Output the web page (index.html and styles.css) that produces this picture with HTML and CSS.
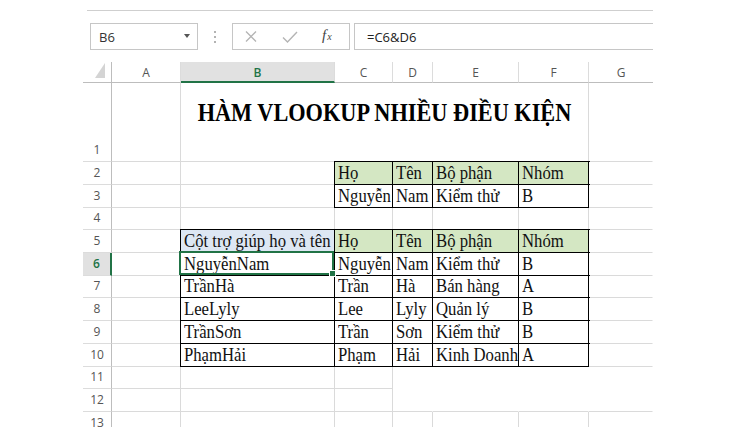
FILE: index.html
```html
<!DOCTYPE html>
<html lang="vi">
<head>
<meta charset="utf-8">
<title>HÀM VLOOKUP NHIỀU ĐIỀU KIỆN</title>
<link rel="stylesheet" href="styles.css">
</head>
<body>
<div class="app">
  <div class="topline"></div>
  <div class="fbar">
    <div class="namebox"><span>B6</span><span class="caret"></span></div>
    <div class="dots">
      <svg width="4" height="14" viewBox="0 0 4 14"><circle cx="2" cy="2" r="1" fill="#9a9a9a"/><circle cx="2" cy="7" r="1" fill="#9a9a9a"/><circle cx="2" cy="12" r="1" fill="#9a9a9a"/></svg>
    </div>
    <div class="fxbox">
      <svg class="ix" width="12" height="11" viewBox="0 0 12 11"><path d="M1 0.5 L11 10.5 M11 0.5 L1 10.5" stroke="#b4b4b4" stroke-width="1.3" fill="none"/></svg>
      <svg class="ic" width="16" height="12" viewBox="0 0 16 12"><path d="M1 6.5 L5.5 11 L15 1" stroke="#b4b4b4" stroke-width="1.4" fill="none"/></svg>
      <span class="fx">f<span>x</span></span>
    </div>
    <div class="formula">=C6&amp;D6</div>
  </div>

  <div class="sheet">
    <!-- header row -->
    <div class="corner"><svg width="10" height="15" viewBox="0 0 10 15"><polygon points="10,0 10,15 0,15" fill="#d4d4d4"/></svg></div>
    <div class="ch">A</div>
    <div class="ch cur">B</div>
    <div class="ch">C</div>
    <div class="ch">D</div>
    <div class="ch">E</div>
    <div class="ch">F</div>
    <div class="ch e">G</div>

    <!-- row 1 -->
    <div class="rh"><span>1</span></div>
    <div class="c"></div>
    <div class="c title"><span>HÀM VLOOKUP NHIỀU ĐIỀU KIỆN</span></div>
    <div class="c e"></div>

    <!-- row 2 -->
    <div class="rh"><span>2</span></div>
    <div class="c"></div>
    <div class="c"></div>
    <div class="c b g"><span>Họ</span></div>
    <div class="c b g"><span>Tên</span></div>
    <div class="c b g"><span>Bộ phận</span></div>
    <div class="c b g"><span>Nhóm</span></div>
    <div class="c e"></div>

    <!-- row 3 -->
    <div class="rh"><span>3</span></div>
    <div class="c"></div>
    <div class="c"></div>
    <div class="c b"><span>Nguyễn</span></div>
    <div class="c b"><span>Nam</span></div>
    <div class="c b"><span>Kiểm thử</span></div>
    <div class="c b"><span>B</span></div>
    <div class="c e"></div>

    <!-- row 4 -->
    <div class="rh"><span>4</span></div>
    <div class="c"></div>
    <div class="c"></div>
    <div class="c"></div>
    <div class="c"></div>
    <div class="c"></div>
    <div class="c"></div>
    <div class="c e"></div>

    <!-- row 5 -->
    <div class="rh"><span>5</span></div>
    <div class="c"></div>
    <div class="c b bl"><span>Cột trợ giúp họ và tên</span></div>
    <div class="c b g"><span>Họ</span></div>
    <div class="c b g"><span>Tên</span></div>
    <div class="c b g"><span>Bộ phận</span></div>
    <div class="c b g"><span>Nhóm</span></div>
    <div class="c e"></div>

    <!-- row 6 -->
    <div class="rh cur"><span>6</span></div>
    <div class="c"></div>
    <div class="c b sel"><span>NguyễnNam</span></div>
    <div class="c b"><span>Nguyễn</span></div>
    <div class="c b"><span>Nam</span></div>
    <div class="c b"><span>Kiểm thử</span></div>
    <div class="c b"><span>B</span></div>
    <div class="c e"></div>

    <!-- row 7 -->
    <div class="rh"><span>7</span></div>
    <div class="c"></div>
    <div class="c b"><span>TrầnHà</span></div>
    <div class="c b"><span>Trần</span></div>
    <div class="c b"><span>Hà</span></div>
    <div class="c b"><span>Bán hàng</span></div>
    <div class="c b"><span>A</span></div>
    <div class="c e"></div>

    <!-- row 8 -->
    <div class="rh"><span>8</span></div>
    <div class="c"></div>
    <div class="c b"><span>LeeLyly</span></div>
    <div class="c b"><span>Lee</span></div>
    <div class="c b"><span>Lyly</span></div>
    <div class="c b"><span>Quản lý</span></div>
    <div class="c b"><span>B</span></div>
    <div class="c e"></div>

    <!-- row 9 -->
    <div class="rh"><span>9</span></div>
    <div class="c"></div>
    <div class="c b"><span>TrầnSơn</span></div>
    <div class="c b"><span>Trần</span></div>
    <div class="c b"><span>Sơn</span></div>
    <div class="c b"><span>Kiểm thử</span></div>
    <div class="c b"><span>B</span></div>
    <div class="c e"></div>

    <!-- row 10 -->
    <div class="rh"><span>10</span></div>
    <div class="c"></div>
    <div class="c b"><span>PhạmHải</span></div>
    <div class="c b"><span>Phạm</span></div>
    <div class="c b"><span>Hải</span></div>
    <div class="c b"><span>Kinh Doanh</span></div>
    <div class="c b"><span>A</span></div>
    <div class="c e"></div>

    <!-- row 11 -->
    <div class="rh"><span>11</span></div>
    <div class="c"></div>
    <div class="c"></div>
    <div class="c"></div>
    <div class="c nb"></div>
    <div class="c nb"></div>
    <div class="c nb"></div>
    <div class="c nb e"></div>

    <!-- row 12 -->
    <div class="rh"><span>12</span></div>
    <div class="c"></div>
    <div class="c"></div>
    <div class="c"></div>
    <div class="c nr"></div>
    <div class="c nr"></div>
    <div class="c nr"></div>
    <div class="c nr e"></div>

    <!-- row 13 -->
    <div class="rh"><span>13</span></div>
    <div class="c"></div>
    <div class="c"></div>
    <div class="c"></div>
    <div class="c"></div>
    <div class="c"></div>
    <div class="c"></div>
    <div class="c e"></div>
  </div>
</div>
</body>
</html>
```

FILE: styles.css
```css
* { box-sizing: border-box; }

html, body {
  margin: 0;
  padding: 0;
  background: #fff;
}

body {
  width: 750px;
  height: 427px;
  overflow: hidden;
  font-family: "Open Sans", "Noto Sans", sans-serif;
  color: #333;
}

.topline {
  margin: 10px 0 0 87px;
  width: 566px;
  border-top: 1px solid #cfcfcf;
}

/* formula bar */
.fbar {
  display: flex;
  margin: 12px 0 0 90px;
  width: 563px;
  height: 27px;
}

.namebox {
  width: 108px;
  border: 1px solid #c6c6c6;
  display: flex;
  align-items: center;
  justify-content: space-between;
  padding: 0 7px 0 8px;
  font-size: 13px;
  color: #333;
}

.caret {
  width: 0;
  height: 0;
  border-left: 3.5px solid transparent;
  border-right: 3.5px solid transparent;
  border-top: 4px solid #555;
  margin-top: -1px;
}

.dots {
  width: 34px;
  display: flex;
  align-items: center;
  justify-content: center;
}

.fxbox {
  width: 118px;
  border: 1px solid #c6c6c6;
  display: flex;
  align-items: center;
  padding-left: 12px;
}

.fxbox .ic { margin-left: 25px; }

.fx {
  margin-left: 24px;
  font-family: "Liberation Serif", "Times New Roman", serif;
  font-style: italic;
  font-size: 15px;
  color: #444;
  margin-top: -2px;
}

.fx span {
  font-size: 10px;
  margin-left: 1px;
}

.formula {
  margin-left: 4px;
  flex: 1;
  border-top: 1px solid #c6c6c6;
  border-bottom: 1px solid #c6c6c6;
  border-left: 1px solid #c6c6c6;
  display: flex;
  align-items: center;
  padding-left: 12px;
  font-size: 13px;
  color: #222;
}

/* sheet grid */
.sheet {
  margin: 12px 0 0 83px;
  display: grid;
  grid-template-columns: 29px 69px 154px 58px 40px 86px 70px 64px;
  grid-template-rows: 21px 79px 23px 23px 22px 23px 23px 22px 23px 23px 23px 22px 23px 23px;
}

.corner {
  border-right: 1px solid #bdbdbd;
  border-bottom: 1px solid #bdbdbd;
  display: flex;
  justify-content: flex-end;
  align-items: flex-end;
  padding: 0 6px 4px 0;
}

.corner svg { display: block; }

.ch {
  border-right: 1px solid #dcdcdc;
  border-bottom: 1px solid #bdbdbd;
  display: flex;
  align-items: center;
  justify-content: center;
  font-size: 12px;
  color: #555;
  padding-top: 1px;
}

.ch.cur {
  background: #e1e1e1;
  border-bottom: 2px solid #217346;
  color: #217346;
  font-weight: 600;
}

.ch.e { border-right: none; }

.rh {
  border-right: 1px solid #bdbdbd;
  border-bottom: 1px solid #dcdcdc;
  display: flex;
  justify-content: center;
  align-items: flex-end;
  padding-bottom: 5px;
  font-size: 12px;
  color: #555;
}

.rh span { line-height: 1; }

.rh.cur {
  background: #e1e1e1;
  border-right: 2px solid #217346;
  color: #217346;
  font-weight: 600;
}

.c {
  border-right: 1px solid #dadada;
  border-bottom: 1px solid #dadada;
  background: #fff;
  display: flex;
  align-items: flex-end;
  padding: 0 2px 1.5px 3px;
  font-family: "Liberation Serif", "Times New Roman", serif;
  font-size: 16.7px;
  color: #111;
  white-space: nowrap;
  min-width: 0;
}

.c > span {
  display: inline-block;
  line-height: 1;
  transform: scaleY(1.15);
  transform-origin: 0 84%;
}

.c.e { border-right-color: transparent; }

.c.b {
  border-right-color: #000;
  border-bottom-color: #000;
  box-shadow: 0 0 0 1px #000;
}

.c.g { background: #d4e7c3; }
.c.bl { background: #dde7f3; }

.c.nb {
  border-right-color: transparent;
  border-bottom-color: transparent;
}

.c.nr { border-right-color: transparent; }

.c.title {
  grid-column: span 5;
  display: block;
  text-align: center;
  padding: 18px 0 0 0;
  font-weight: bold;
  font-size: 22.3px;
  color: #000;
}

.c.title > span { transform-origin: 50% 84%; }

.c.b.sel {
  box-shadow: none;
  position: relative;
}

.sel::after {
  content: "";
  position: absolute;
  left: -2px;
  top: -2px;
  right: 0;
  bottom: 0;
  border: 2px solid #217346;
}

.sel::before {
  content: "";
  position: absolute;
  right: -2px;
  bottom: -2px;
  width: 5px;
  height: 5px;
  background: #217346;
  border: 1px solid #fff;
  z-index: 1;
}
```
